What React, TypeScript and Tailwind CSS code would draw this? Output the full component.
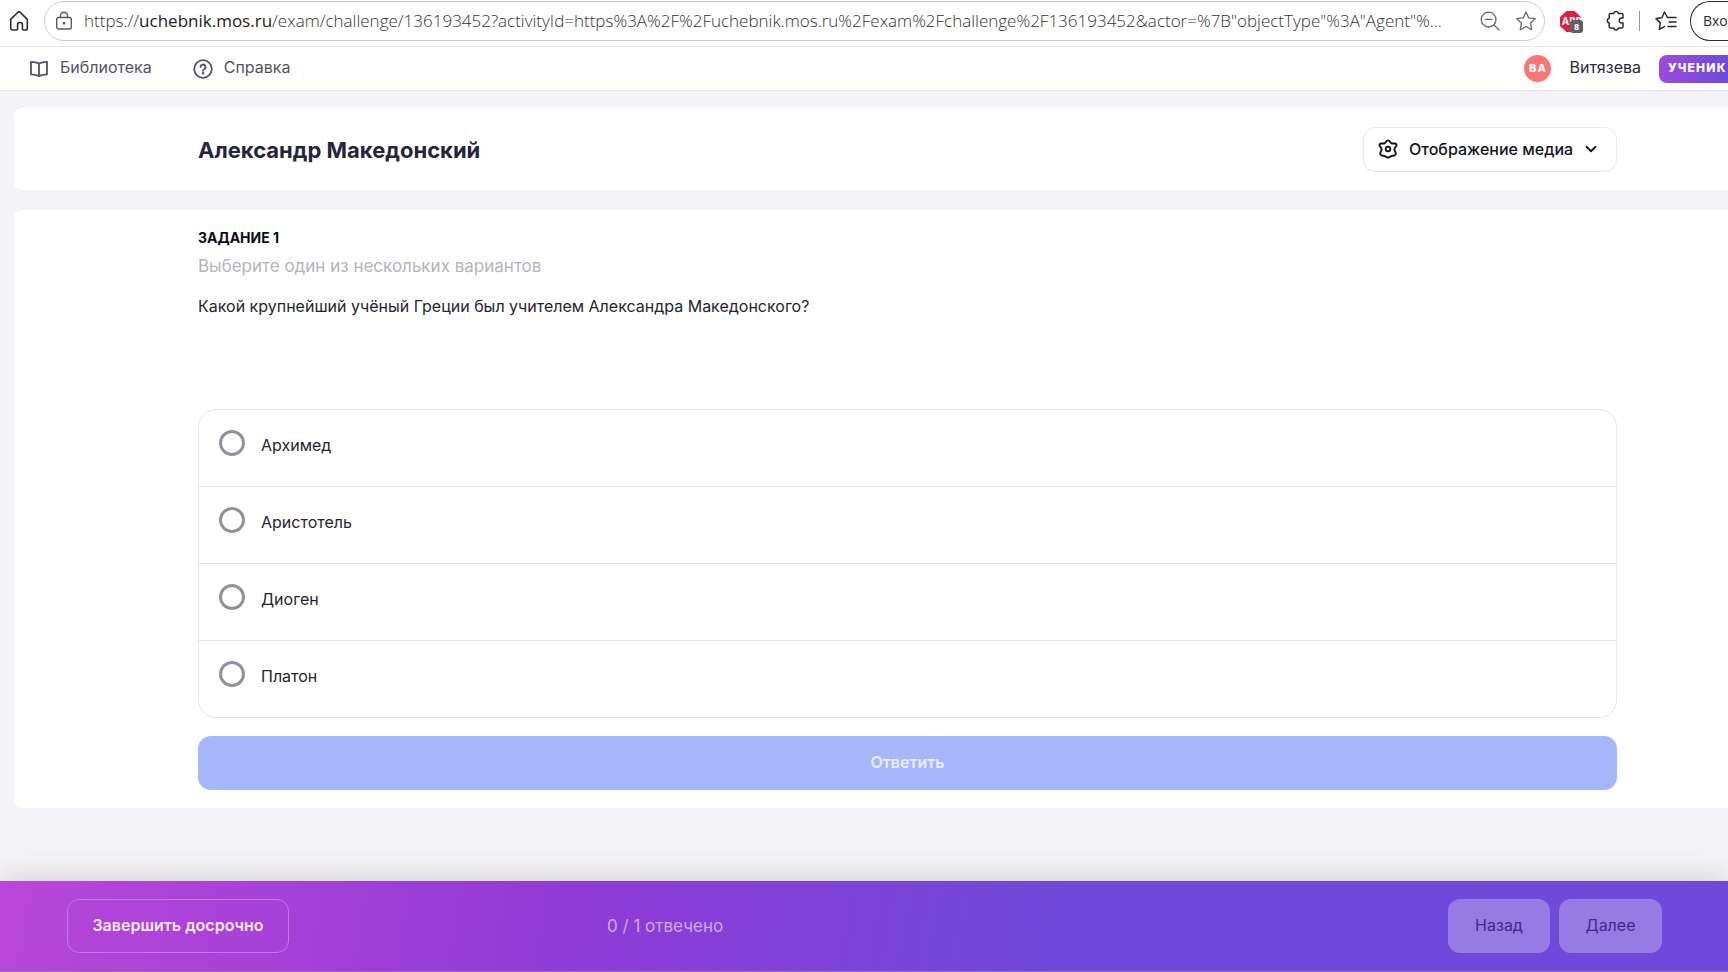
import { useState } from 'react';
import { ChevronDown } from 'lucide-react';

interface IOption {
  id: string;
  label: string;
}

const options: IOption[] = [
  { id: 'archimedes', label: 'Архимед' },
  { id: 'aristotle', label: 'Аристотель' },
  { id: 'diogenes', label: 'Диоген' },
  { id: 'plato', label: 'Платон' },
];

const iconProps = {
  fill: 'none',
  stroke: 'currentColor',
  strokeLinecap: 'round' as const,
  strokeLinejoin: 'round' as const,
};

function BrowserBar() {
  return (
    <div className="flex h-[47px] items-start border-b border-[#e3e3e5] bg-white pt-px font-['Open_Sans','Noto_Sans',sans-serif] text-[#2b2b2b]">
      <button type="button" aria-label="Домашняя страница" className="mt-[9px] ml-2 shrink-0">
        <svg width="22" height="22" viewBox="0 0 22 22" strokeWidth="1.6" {...iconProps}>
          <path d="M2.7 9.4 9.9 2.2a1.6 1.6 0 0 1 2.2 0l7.2 7.2v8.800a1.800 1.800 0 0 1-1.800 1.800h-1.900a1.200 1.200 0 0 1-1.200-1.200v-4.300a2 2 0 0 0-2-2h-.8a2 2 0 0 0-2 2v4.300a1.200 1.200 0 0 1-1.200 1.200H4.500a1.800 1.800 0 0 1-1.800-1.800z" />
        </svg>
      </button>

      <div className="ml-[14px] flex h-10 min-w-0 flex-1 items-center rounded-full border border-[#cbcfcb] pr-2 pl-[10px]">
        <svg className="shrink-0 text-[#5c5c5c]" width="18" height="20" viewBox="0 0 18 20" strokeWidth="1.4" {...iconProps}>
          <rect x="1.7" y="6.5" width="14.6" height="11.5" rx="2" />
          <path d="M5.5 6.5V4.7a3.5 3.5 0 0 1 7 0v1.8" />
          <circle cx="9" cy="12.2" r=".7" fill="currentColor" />
        </svg>
        <p className="ml-[11px] min-w-0 flex-1 overflow-hidden text-[17px] font-light whitespace-nowrap text-[#333]">
          https://<span className="font-normal text-[#1b1b1b]">uchebnik.mos.ru</span>
          {'/exam/challenge/136193452?activityId=https%3A%2F%2Fuchebnik.mos.ru%2Fexam%2Fchallenge%2F136193452&actor=%7B"objectType"%3A"Agent"%...'}
        </p>
        <button type="button" aria-label="Масштаб" className="ml-3 shrink-0 text-[#6a6a6a]">
          <svg width="20" height="20" viewBox="0 0 20 20" strokeWidth="1.3" {...iconProps}>
            <circle cx="8.6" cy="8.6" r="7.4" />
            <path d="m14 14 5 5M5.3 8.4h6.6" />
          </svg>
        </button>
        <button type="button" aria-label="В избранное" className="ml-4 shrink-0 text-[#6a6a6a]">
          <svg width="20" height="20" viewBox="0 0 20 20" strokeWidth="1.3" {...iconProps}>
            <path d="m10 1 2.700 5.900 6.500.8-4.700 4.500 1.200 6.500-5.700-3.200-5.700 3.200 1.200-6.500L.8 7.700l6.500-.8z" />
          </svg>
        </button>
      </div>

      <button type="button" aria-label="Блокировщик рекламы" className="relative mt-[9px] ml-[15px] h-6 w-6 shrink-0">
        <svg width="22" height="22" viewBox="0 0 22 22">
          <path d="M6.500 0h8l6.500 6v9l-6.500 6h-8L0 15V6z" fill="#e0203f" />
        </svg>
        <span className="absolute top-[5px] left-[2px] text-[10px] leading-3 font-bold text-white">ABP</span>
        <span className="absolute top-[10px] left-[10px] h-[13px] w-[13px] rounded-[3px] bg-[#5f6164] text-center text-[9px] leading-[13px] font-bold text-white">
          8
        </span>
      </button>
      <button type="button" aria-label="Расширения" className="mt-[9px] ml-[21px] shrink-0">
        <svg width="21" height="21" viewBox="0 0 21 21" strokeWidth="1.5" {...iconProps}>
          <path d="M5.500 3.500h3.200a2.400 2.400 0 0 1 4.700 0h3.300a1.300 1.300 0 0 1 1.300 1.300v3.200h-1.300a2.500 2.500 0 0 0 0 5h1.300v3.700a1.300 1.300 0 0 1-1.300 1.300h-3.300a2.400 2.400 0 0 1-4.700 0H5.500a1.300 1.300 0 0 1-1.300-1.300v-3.800a2.400 2.400 0 0 1 0-4.700V4.800a1.300 1.300 0 0 1 1.300-1.300z" />
        </svg>
      </button>
      <span className="mt-[10px] ml-[13px] h-5 w-px shrink-0 bg-[#9a9a9a]" />
      <button type="button" aria-label="Избранное" className="mt-[10px] ml-[15px] shrink-0">
        <svg width="22" height="20" viewBox="0 0 22 20" strokeWidth="1.5" {...iconProps}>
          <path d="M12.500 6.500 9.500 1 6.900 6.700 1 7.600l4.300 4.300-1 6.500 5.200-2.800M12.500 6.500H21M14 11h7M13 15.500h8" />
        </svg>
      </button>
      <button
        type="button"
        className="ml-[13px] h-10 w-[38px] shrink-0 overflow-hidden rounded-l-full border border-r-0 border-[#2b2b2b] pl-3 text-left text-sm whitespace-nowrap"
      >
        Вход
      </button>
    </div>
  );
}

function SiteHeader() {
  return (
    <header className="flex h-11 items-center border-b border-[#e4e4ea] bg-white pl-[30px] text-base text-[#53535f]">
      <nav className="flex items-center gap-[41px]">
        <a href="#library" className="flex items-center gap-3">
          <svg width="18" height="18" viewBox="0 0 18 18" strokeWidth="1.8" {...iconProps}>
            <path d="M9 3.500C6.800 2.200 3.800 1.800 1 1.800v12.500c2.800 0 5.800.4 8 1.900 2.200-1.500 5.200-1.900 8-1.900V1.800c-2.800 0-5.800.4-8 1.700zM9 3.500v12.700" />
          </svg>
          <span className="pb-[3px]">Библиотека</span>
        </a>
        <a href="#help" className="flex items-center gap-[11px]">
          <svg width="20" height="20" viewBox="0 0 20 20" strokeWidth="1.8" {...iconProps}>
            <circle cx="10" cy="10" r="8.800" />
            <path d="M7.500 8a2.500 2.500 0 1 1 3.700 2.200c-.8.4-1.200.9-1.200 1.600" />
            <circle cx="10" cy="14.300" r=".5" fill="currentColor" />
          </svg>
          <span className="pb-[3px]">Справка</span>
        </a>
      </nav>
      <div className="ml-auto flex shrink-0 items-center">
        <span className="flex h-[27px] w-[27px] items-center justify-center rounded-full bg-[#fb7573] text-[11px] font-extrabold tracking-widest text-white">
          ВА
        </span>
        <span className="ml-[18px] pb-[3px] text-[#2a2a38]">Витязева</span>
        <span className="ml-[18px] flex h-7 w-[69px] items-center overflow-hidden rounded-l-lg bg-linear-to-r from-[#9b4bdc] to-[#6c4adb] pb-px pl-[9px] text-xs font-extrabold tracking-widest text-white">
          УЧЕНИК
        </span>
      </div>
    </header>
  );
}

function BottomBar() {
  return (
    <footer className="mt-auto grid h-[91px] grid-cols-[1fr_auto] items-center border-b border-[#8a7a9a] bg-[linear-gradient(100deg,#b947d9_0%,#903bd6_33%,#6f49d9_61%,#6f49d9_100%)] pr-[66px] pl-[67px] shadow-[0_-4px_32px_rgba(0,0,0,0.14)]">
      <div className="flex items-center">
        <button
          type="button"
          className="h-[54px] w-[222px] rounded-xl border border-[#c478ea] pb-0.5 text-base font-semibold text-[#fbeaff]"
        >
          Завершить досрочно
        </button>
        <p className="pt-0.5 pl-[318px] text-[17px] text-[#d3a6f0]">0 / 1 отвечено</p>
      </div>
      <div className="flex gap-[9px]">
        <button type="button" className="h-[54px] w-[102px] rounded-xl bg-[#977be4] pb-0.5 text-base text-[#44278f]">
          Назад
        </button>
        <button type="button" className="h-[54px] w-[103px] rounded-xl bg-[#977be4] pb-0.5 text-base text-[#44278f]">
          Далее
        </button>
      </div>
    </footer>
  );
}

function App() {
  const [answer, setAnswer] = useState('');

  return (
    <div className="flex min-h-screen flex-col overflow-hidden bg-[#f3f3f8] font-['Inter',sans-serif] text-[#25252f]">
      <BrowserBar />
      <SiteHeader />

      <main className="mb-6 flex flex-col gap-5 pt-[17px] pl-[14px]">
        <section className="flex h-[82px] items-center justify-between rounded-l-lg bg-white pr-[111px] pl-[184px]">
          <h1 className="pt-0.5 text-[22px] font-bold text-[#25253a]">Александр Македонский</h1>
          <button
            type="button"
            className="flex h-[45px] w-[254px] items-center rounded-xl border border-[#e8e8ec] pl-[14px] text-base font-medium text-[#14141f]"
          >
            <svg width="20" height="20" viewBox="0 0 20 20" strokeWidth="1.9" {...iconProps}>
              <path d="M6.400 4.500C7.800 4.200 8 1.400 10 1.400s2.200 2.800 3.600 3.100c1.400.4 3.900-.9 4.800.9.900 1.900-1.800 3-2 4.600-.2 1.500 1.700 3.300 1.300 5.200-.5 2-3.200 1.300-4.500 1.900-.9.500-1.700 1.500-3.200 1.500s-2.300-1-3.200-1.500c-1.300-.6-4 .1-4.500-1.900-.4-1.900 1.500-3.700 1.300-5.200-.2-1.600-2.900-2.700-2-4.600.9-1.800 3.400-.5 4.800-.9z" />
              <circle cx="10" cy="10" r="2.300" />
            </svg>
            <span className="ml-[11px]">Отображение медиа</span>
            <ChevronDown className="ml-[9px]" size={18} strokeWidth={2.4} />
          </button>
        </section>

        <section className="rounded-l-lg bg-white pt-[18px] pr-[111px] pb-[18px] pl-[184px]">
          <h2 className="text-sm leading-5 font-bold text-[#0b0b14]">ЗАДАНИЕ 1</h2>
          <p className="mt-1 text-[17px] leading-7 text-[#b4b4bd]">Выберите один из нескольких вариантов</p>
          <p className="mt-3 text-base leading-7">
            Какой крупнейший учёный Греции был учителем Александра Македонского?
          </p>

          <form>
            <fieldset
              aria-label="Варианты ответа"
              className="mt-[89px] divide-y divide-[#e6e6ea] rounded-[18px] border border-[#e6e6ea]"
            >
              {options.map((option) => (
                <label key={option.id} className="flex h-[77px] items-start pt-5 pl-5 text-base last:h-[76px]">
                  <input
                    type="radio"
                    name="answer"
                    value={option.id}
                    checked={answer === option.id}
                    onChange={() => setAnswer(option.id)}
                    className="h-[26px] w-[26px] shrink-0 appearance-none rounded-full border-[3px] border-[#92929f] checked:border-8 checked:border-[#4d6bf5]"
                  />
                  <span className="ml-4 pt-[3px] leading-6">{option.label}</span>
                </label>
              ))}
            </fieldset>
            <button
              type="button"
              className="mt-[18px] h-[54px] w-full rounded-[13px] bg-[#a6b6fb] pb-0.5 text-base font-semibold text-[#e9eefe]"
            >
              Ответить
            </button>
          </form>
        </section>
      </main>

      <BottomBar />
    </div>
  );
}

export default App;
